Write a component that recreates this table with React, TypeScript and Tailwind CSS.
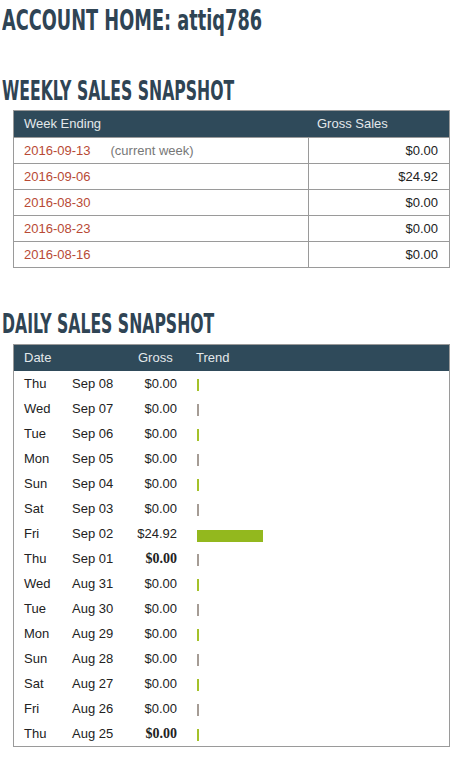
const weekly = [
    { date: '2016-09-13', note: '(current week)', gross: '$0.00' },
    { date: '2016-09-06', gross: '$24.92' },
    { date: '2016-08-30', gross: '$0.00' },
    { date: '2016-08-23', gross: '$0.00' },
    { date: '2016-08-16', gross: '$0.00' },
];

const daily = [
    { day: 'Thu', date: 'Sep 08', gross: '$0.00', bold: false, bar: 0 },
    { day: 'Wed', date: 'Sep 07', gross: '$0.00', bold: false, bar: 0 },
    { day: 'Tue', date: 'Sep 06', gross: '$0.00', bold: false, bar: 0 },
    { day: 'Mon', date: 'Sep 05', gross: '$0.00', bold: false, bar: 0 },
    { day: 'Sun', date: 'Sep 04', gross: '$0.00', bold: false, bar: 0 },
    { day: 'Sat', date: 'Sep 03', gross: '$0.00', bold: false, bar: 0 },
    { day: 'Fri', date: 'Sep 02', gross: '$24.92', bold: false, bar: 66 },
    { day: 'Thu', date: 'Sep 01', gross: '$0.00', bold: true, bar: 0 },
    { day: 'Wed', date: 'Aug 31', gross: '$0.00', bold: false, bar: 0 },
    { day: 'Tue', date: 'Aug 30', gross: '$0.00', bold: false, bar: 0 },
    { day: 'Mon', date: 'Aug 29', gross: '$0.00', bold: false, bar: 0 },
    { day: 'Sun', date: 'Aug 28', gross: '$0.00', bold: false, bar: 0 },
    { day: 'Sat', date: 'Aug 27', gross: '$0.00', bold: false, bar: 0 },
    { day: 'Fri', date: 'Aug 26', gross: '$0.00', bold: false, bar: 0 },
    { day: 'Thu', date: 'Aug 25', gross: '$0.00', bold: true, bar: 0 },
];

const headingText =
    "inline-block origin-left font-['DejaVu_Sans_Condensed','DejaVu_Sans',sans-serif] leading-none font-bold text-[#2f4454]";

// condensed display heading (no Oswald here, so squeeze DejaVu Condensed)
function Heading({ children, className }: { children: React.ReactNode; className?: string }) {
    return (
        <div className={`h-[27px] pl-[2px] whitespace-nowrap ${className ?? ''}`}>
            <span className={`${headingText} scale-x-[0.645] text-[27px]`}>{children}</span>
        </div>
    );
}

export default function App() {
    return (
        <div className="w-[470px] h-[766px] bg-white overflow-hidden pt-[6px] font-['Liberation_Sans',Arial,sans-serif] text-[13px] text-[#222]">
            <div className="h-[29px] pl-[2px] whitespace-nowrap">
                <span className={`${headingText} scale-x-[0.68] text-[29px]`}>ACCOUNT HOME: attiq786</span>
            </div>

            <Heading className="mt-[42px]">WEEKLY SALES SNAPSHOT</Heading>

            <div className="ml-[13px] mt-[6px] w-[437px] border border-[#9a9a9a]">
                <div className="flex h-[26px] items-center bg-[#2f4a5a] text-[#e3e8eb]">
                    <div className="w-[295px] pl-[10px]">Week Ending</div>
                    <div className="pl-[8px]">Gross Sales</div>
                </div>
                {weekly.map((w) => (
                    <div key={w.date} className="flex h-[26px] border-t border-[#9a9a9a]">
                        <div className="w-[295px] flex items-center pl-[10px] border-r border-[#9a9a9a]">
                            <span className="text-[#b84a35]">{w.date}</span>
                            {w.note && <span className="ml-[20px] text-[#777]">{w.note}</span>}
                        </div>
                        <div className="flex-1 flex items-center justify-end pr-[11px]">{w.gross}</div>
                    </div>
                ))}
            </div>

            <Heading className="mt-[42px]">DAILY SALES SNAPSHOT</Heading>

            <div className="ml-[13px] mt-[7px] w-[437px] border border-[#9a9a9a]">
                <div className="flex h-[26px] items-center bg-[#2f4a5a] text-[#e3e8eb]">
                    <div className="w-[124px] pl-[10px]">Date</div>
                    <div className="w-[58px]">Gross</div>
                    <div>Trend</div>
                </div>
                {daily.map((d, i) => (
                    <div key={d.date} className="flex h-[25px] items-center">
                        <div className="w-[58px] pl-[10px]">{d.day}</div>
                        <div className="w-[52px]">{d.date}</div>
                        <div
                            className={`w-[53px] text-right ${d.bold ? "font-['Liberation_Serif',serif] font-bold text-[14px]" : ''}`}
                        >
                            {d.gross}
                        </div>
                        <div className="pl-[20px] flex items-center h-full">
                            {d.bar > 0 ? (
                                <div className="h-[12px] mt-[4px] bg-[#93b81e]" style={{ width: d.bar }} />
                            ) : (
                                <div
                                    className={`w-[2px] h-[12px] mt-[3px] ${i % 2 === 0 ? 'bg-[#a4c22a]' : 'bg-[#a59c95]'}`}
                                />
                            )}
                        </div>
                    </div>
                ))}
            </div>
        </div>
    );
}
